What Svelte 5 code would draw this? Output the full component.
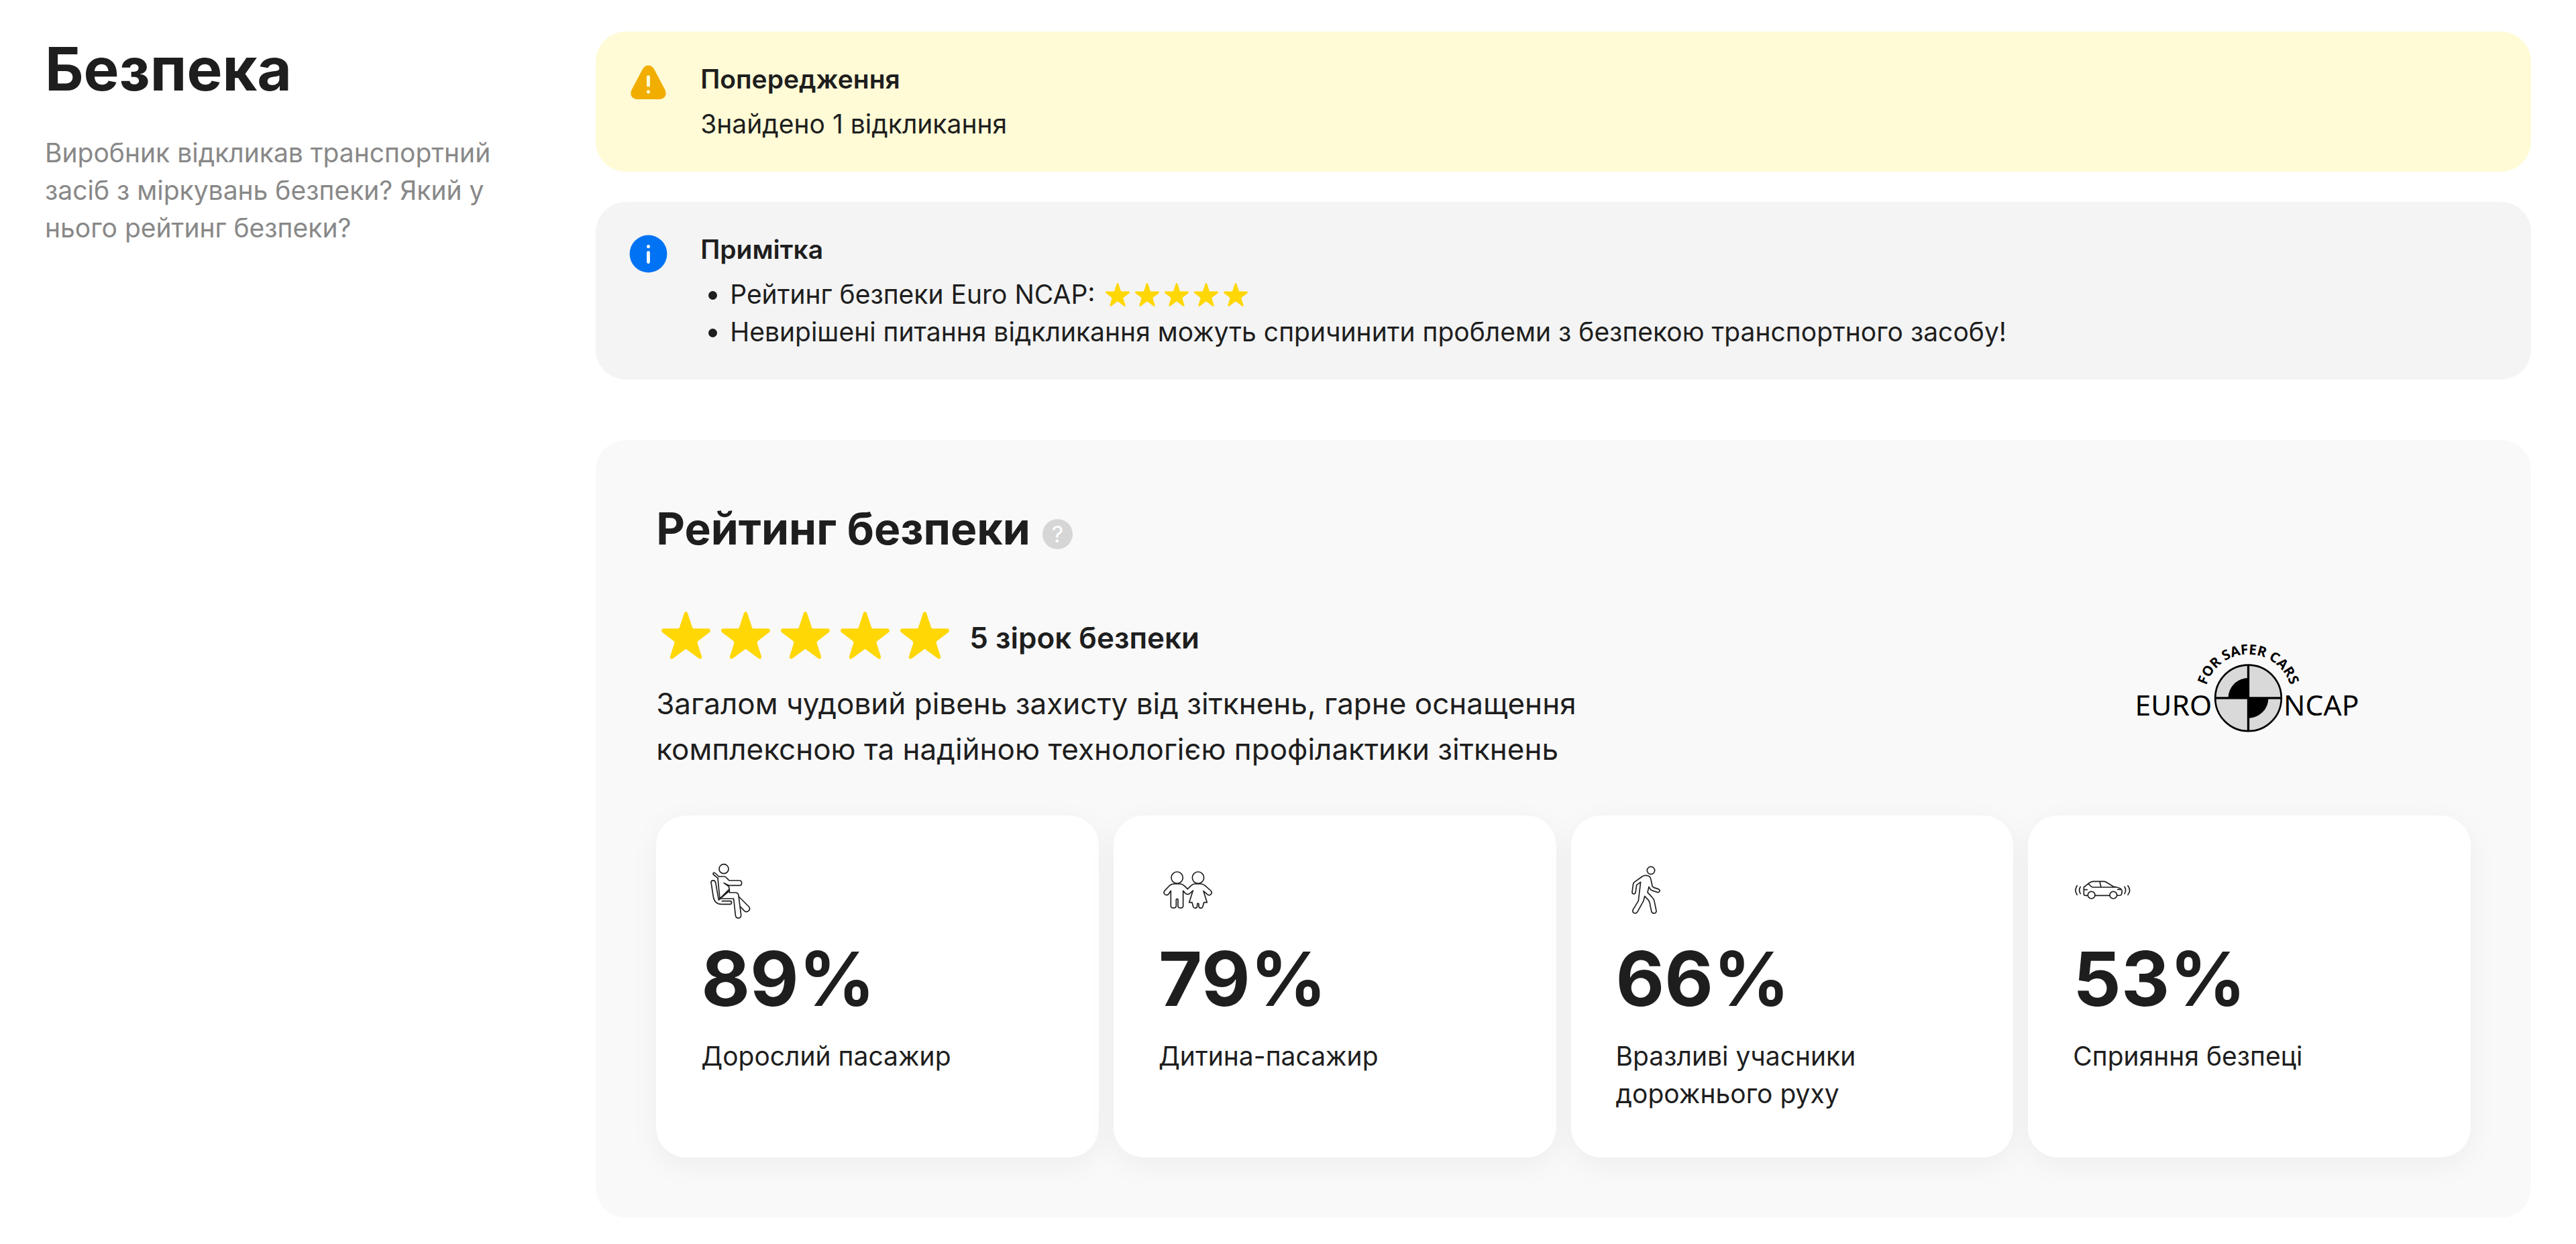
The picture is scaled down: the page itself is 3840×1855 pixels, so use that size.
<script>
  const stars = [1, 2, 3, 4, 5];

  const scores = [
    { icon: "adult", value: 89, label: "Дорослий пасажир" },
    { icon: "child", value: 79, label: "Дитина-пасажир" },
    { icon: "pedestrian", value: 66, label: "Вразливі учасники дорожнього руху" },
    { icon: "assist", value: 53, label: "Сприяння безпеці" },
  ];
</script>

{#snippet star()}
  <svg class="star" viewBox="-0.5 -0.5 33 33" aria-hidden="true">
    <path d="M15 4.2C15.4 3 16.6 3 17 4.2l2.5 7.6c.2.5.5.8 1.1.8h7.7c1.2 0 1.6 1.4.7 2.1l-6.2 4.7c-.4.3-.5.8-.4 1.3l2.3 7.3c.3 1.1-.7 1.8-1.6 1.1l-6.4-4.8c-.5-.4-.9-.4-1.4 0l-6.4 4.8c-.9.7-1.9 0-1.6-1.1l2.3-7.3c.1-.5 0-1-.4-1.3L3 14.7c-.9-.7-.5-2.1.7-2.1h7.7c.6 0 .9-.3 1.1-.8z" />
  </svg>
{/snippet}

<main class="safety">
  <header class="intro">
    <h1>Безпека</h1>
    <p>Виробник відкликав транспортний засіб з міркувань безпеки? Який у нього рейтинг безпеки?</p>
  </header>

  <div class="content">
    <section class="alert warning">
      <svg class="alert-icon" viewBox="0 0 24 24" aria-hidden="true">
        <path fill="#f2ae00" d="M8.9 4.4c1.4-2.8 4.800-2.800 6.200 0l5.700 10.700c1.500 2.900-.1 5.300-3 5.300H6.200c-2.900 0-4.500-2.400-3-5.300z" />
        <path stroke="#fffbd6" stroke-width="1.8" stroke-linecap="round" d="M12 8.500v4.500M12 16.400v.1" />
      </svg>
      <div>
        <h2>Попередження</h2>
        <p>Знайдено 1 відкликання</p>
      </div>
    </section>

    <section class="alert note">
      <svg class="alert-icon" viewBox="0 0 24 24" aria-hidden="true">
        <circle cx="12" cy="12" r="10" fill="#0073f5" />
        <path stroke="#fff" stroke-width="1.7" stroke-linecap="round" d="M12 8v.2M12 11.300v5.100" />
      </svg>
      <div>
        <h2>Примітка</h2>
        <ul>
          <li>
            Рейтинг безпеки Euro NCAP:
            <span class="stars small">{#each stars as n (n)}{@render star()}{/each}</span>
          </li>
          <li>Невирішені питання відкликання можуть спричинити проблеми з безпекою транспортного засобу!</li>
        </ul>
      </div>
    </section>

    <section class="rating">
      <div class="rating-title">
        <h2>Рейтинг безпеки</h2>
        <button type="button" class="help">?</button>
      </div>

      <div class="summary">
        <div class="verdict">
          <div class="verdict-stars">
            <span class="stars">{#each stars as n (n)}{@render star()}{/each}</span>
            <strong>5 зірок безпеки</strong>
          </div>
          <p>Загалом чудовий рівень захисту від зіткнень, гарне оснащення комплексною та надійною технологією профілактики зіткнень</p>
        </div>

        <svg class="ncap" viewBox="132 96 1000 400" role="img" aria-label="Euro NCAP">
          <defs>
            <path id="ncap-arc" d="M439 339a196 196 0 0 1 392 0" />
          </defs>
          <circle cx="635" cy="339" r="148" fill="#d9d9d9" stroke="#000" stroke-width="8" />
          <path d="M635 249a90 90 0 0 0-90 90h90zM635 429a90 90 0 0 0 90-90h-90z" />
          <path d="M635 191v296M487 339h296" stroke="#000" stroke-width="10" />
          <text class="ncap-name" x="472" y="418" text-anchor="end">EURO</text>
          <text class="ncap-name" x="793" y="418">NCAP</text>
          <text class="ncap-motto" text-anchor="middle">
            <textPath href="#ncap-arc" startOffset="50%">FOR SAFER CARS</textPath>
          </text>
        </svg>
      </div>

      <div class="scores">
        {#each scores as score (score.icon)}
          <article class="score">
            {#if score.icon === "adult"}
              <svg class="score-icon" viewBox="78 73 270 270" aria-hidden="true">
                <circle cx="180" cy="111" r="21" />
                <path d="M154 153l-21-17c-4-5 3-11 8-6l17 15" />
                <path d="M158 145h24c5 0 8 3 11 7l11 11h46c13 0 13 22 0 22h-48l-22-11 20 14c5 4 5 9 5 15v14h27c9 0 13 5 14 13l11 87c1 19-23 19-25 1l-8-74h-61" />
                <path d="M153 152l9 92 41-41M157 250l48-41M143 171l14 79M123 171c0-10 17-12 19 0M123 171l10 65c4 22 15 33 37 33h38c9 0 9-14 0-14h-36" />
                <path d="M247 235l45 45c11 13-7 30-20 19l-17-18" />
              </svg>
            {:else if score.icon === "child"}
              <svg class="score-icon" viewBox="82 73 270 270" aria-hidden="true">
                <circle cx="165" cy="150" r="26" />
                <circle cx="259" cy="150" r="26" />
                <path d="M137 209v67c0 13 24 13 24 0v-28c0-4 8-4 8 0v28c0 13 23 13 23 0v-67l8 9c7 9 18 9 25 0l11-10-17 53h13l5 18c4 11 18 9 18-2v-9c0-4 7-4 7 0v9c0 11 14 13 18 2l5-18h14l-16-51 17 15c12 10 27-6 15-17l-22-20c-6-5-13-10-22-10h-24c-9 0-16 4-22 10l-13 13-13-13c-6-6-13-10-22-10h-25c-9 0-16 3-22 9l-19 20c-12 12 3 29 16 17z" />
              </svg>
            {:else if score.icon === "pedestrian"}
              <svg class="score-icon" viewBox="86 73 270 270" aria-hidden="true">
                <circle cx="242" cy="118" r="17" />
                <path d="M219 140c12 0 21 6 23 18l6 29c1 4 4 6 8 8l19 6c12 5 6 17-5 14l-22-7c-6-2-10-6-15-17l-6 25 23 25c4 4 6 8 7 14l9 43c2 14-18 16-22 2l-7-36-5-12-18-19-5 21-27 49c-8 13-27 4-20-10l24-39 10-84-18 13-5 34c-2 9-15 8-15-2l5-38 4-6 36-26c5-3 8-5 16-5z" />
              </svg>
            {:else}
              <svg class="score-icon" viewBox="91 73 270 270" aria-hidden="true">
                <circle cx="174" cy="228" r="16" />
                <circle cx="272" cy="228" r="16" />
                <path d="M190 230h66M158 230h-12c-4 0-6-3-6-7v-30l21-17 12-7c3-2 6-2 10-2h48c4 0 8 2 12 5l29 18c13 3 34 3 38 17 2 9-1 20-6 22l-15 1M160 177l13 13c3 3 5 3 9 3h101M211 168l6 25M140 204h15M307 203h-16M125 191c-6 9-6 22 0 31M110 186c-9 13-9 28 0 41M322 191c6 9 6 22 0 31M337 186c10 13 10 28 0 41" />
              </svg>
            {/if}
            <strong>{score.value}%</strong>
            <p>{score.label}</p>
          </article>
        {/each}
      </div>
    </section>
  </div>
</main>

<style>
  :global(body) {
    background: #fff;
  }

  .safety {
    display: grid;
    grid-template-columns: 1fr 4fr;
    column-gap: 100px;
    padding: 47px 67px 36px;
    color: #1e1e1e;
    font-family: Inter, "Noto Sans", sans-serif;
    font-size: 39px;
    line-height: 56px;
  }

  h1,
  h2,
  p,
  ul {
    margin: 0;
  }

  h1 {
    margin-bottom: 41px;
    font-size: 89px;
    font-weight: 700;
    line-height: 112px;
  }

  .intro p {
    color: #888;
  }

  .content {
    display: flex;
    flex-direction: column;
  }

  /* Alerts */
  .alert {
    display: flex;
    gap: 44px;
    padding: 43px 45px;
    border-radius: 45px;
  }

  .warning {
    background: #fffbd6;
  }

  .note {
    margin-top: 45px;
    background: #f4f4f4;
  }

  .alert-icon {
    flex: none;
    width: 67px;
    height: 67px;
    margin-top: 1px;
    fill: none;
  }

  .alert h2 {
    margin-bottom: 11px;
    font-size: 39px;
    font-weight: 600;
    line-height: 56px;
  }

  .alert ul {
    padding-left: 44px;
  }

  .stars {
    display: inline-flex;
  }

  .star {
    width: 89px;
    height: 89px;
    fill: #ffd704;
  }

  .small {
    vertical-align: top;
    padding: 6px 0;
  }

  .small .star {
    width: 44px;
    height: 44px;
  }

  /* Rating panel */
  .rating {
    margin-top: 90px;
    padding: 90px;
    border-radius: 45px;
    background: #f9f9f9;
  }

  .rating-title {
    display: flex;
    align-items: center;
    gap: 18px;
  }

  .rating-title h2 {
    font-size: 66px;
    font-weight: 700;
    line-height: 84px;
  }

  .help {
    width: 45px;
    height: 45px;
    margin-top: 16px;
    padding: 0;
    border: 0;
    border-radius: 50%;
    background: #d6d6d6;
    color: #fff;
    font: 400 34px/45px Inter, sans-serif;
    cursor: pointer;
  }

  .summary {
    display: grid;
    grid-template-columns: 3fr 1fr;
    align-items: center;
    column-gap: 44px;
    margin-top: 72px;
  }

  .verdict-stars {
    display: flex;
    align-items: center;
    gap: 22px;
  }

  .verdict-stars strong {
    padding-top: 8px;
    font-size: 44px;
    font-weight: 600;
  }

  .verdict p {
    max-width: 1500px;
    margin-top: 24px;
    font-size: 44px;
    line-height: 68px;
  }

  .ncap {
    justify-self: center;
    width: 333px;
    overflow: visible;
  }

  .ncap-name {
    font: 400 128px "Noto Sans", sans-serif;
  }

  .ncap-motto {
    font: 700 62px "Noto Sans", sans-serif;
  }

  /* Score cards */
  .scores {
    display: grid;
    grid-template-columns: repeat(4, 1fr);
    gap: 22px;
    margin-top: 65px;
  }

  .score {
    display: flex;
    flex-direction: column;
    padding: 67px;
    border-radius: 45px;
    background: #fff;
    box-shadow: 0 11px 45px rgba(0, 0, 0, 0.05);
  }

  .score-icon {
    width: 90px;
    height: 90px;
    fill: none;
    stroke: #1e1e1e;
    stroke-width: 5;
    stroke-linejoin: round;
    stroke-linecap: round;
  }

  .score strong {
    margin: 19px 0 21px;
    font-size: 112px;
    font-weight: 700;
    line-height: 134px;
  }
</style>
